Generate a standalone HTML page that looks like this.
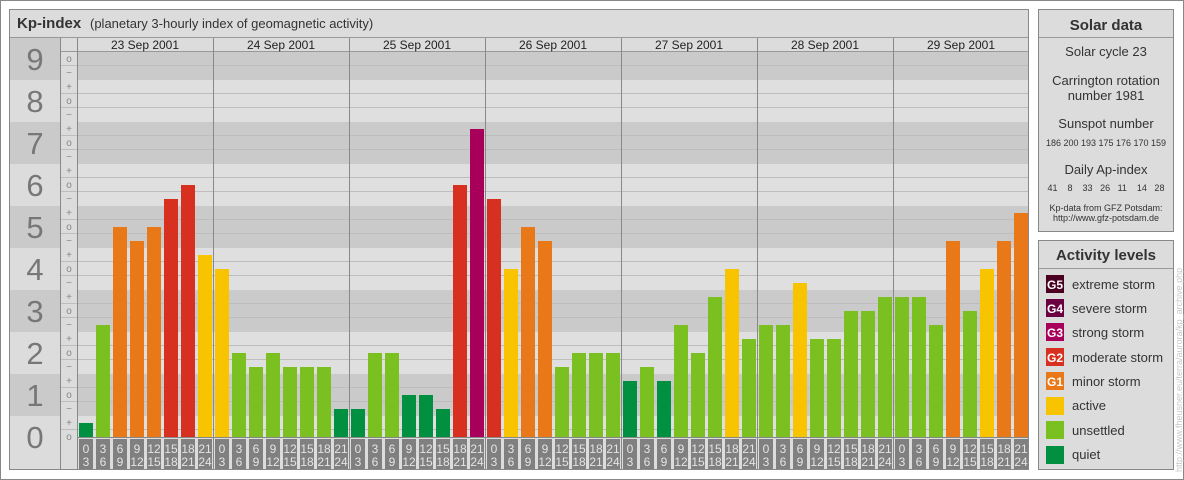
<!DOCTYPE html>
<html><head><meta charset="utf-8"><style>
html,body{margin:0;padding:0;background:#fff}
svg{display:block;font-family:"Liberation Sans",sans-serif}
</style></head><body>
<svg width="1184" height="480" viewBox="0 0 1184 480" xmlns="http://www.w3.org/2000/svg">
<rect x="0.5" y="0.5" width="1183" height="479" fill="#fff" stroke="#888"/>
<rect x="9.5" y="9.5" width="1019" height="460" fill="#dcdcdc" stroke="#888"/>
<line x1="10" y1="37.5" x2="1028" y2="37.5" stroke="#999"/>
<text x="17" y="28" font-size="15" font-weight="bold" fill="#333">Kp-index</text>
<text x="90" y="28" font-size="13" fill="#333">(planetary 3-hourly index of geomagnetic activity)</text>
<g fill="#cacaca">
<rect x="10" y="38" width="50" height="42"/><rect x="77" y="51" width="951" height="29"/>
<rect x="10" y="122" width="50" height="42"/><rect x="77" y="122" width="951" height="42"/>
<rect x="10" y="206" width="50" height="42"/><rect x="77" y="206" width="951" height="42"/>
<rect x="10" y="290" width="50" height="42"/><rect x="77" y="290" width="951" height="42"/>
<rect x="10" y="374" width="50" height="42"/><rect x="77" y="374" width="951" height="42"/>
</g>
<g fill="#dfdfdf">
<rect x="77" y="80" width="951" height="42"/><rect x="77" y="164" width="951" height="42"/>
<rect x="77" y="248" width="951" height="42"/><rect x="77" y="332" width="951" height="42"/>
<rect x="77" y="416" width="951" height="22"/>
</g>
<g stroke="#bdbdbd" stroke-width="1">
<line x1="60" y1="65.5" x2="1028" y2="65.5"/>
<line x1="60" y1="93.5" x2="1028" y2="93.5"/><line x1="60" y1="107.5" x2="1028" y2="107.5"/>
<line x1="60" y1="135.5" x2="1028" y2="135.5"/><line x1="60" y1="149.5" x2="1028" y2="149.5"/>
<line x1="60" y1="177.5" x2="1028" y2="177.5"/><line x1="60" y1="191.5" x2="1028" y2="191.5"/>
<line x1="60" y1="219.5" x2="1028" y2="219.5"/><line x1="60" y1="233.5" x2="1028" y2="233.5"/>
<line x1="60" y1="261.5" x2="1028" y2="261.5"/><line x1="60" y1="275.5" x2="1028" y2="275.5"/>
<line x1="60" y1="303.5" x2="1028" y2="303.5"/><line x1="60" y1="317.5" x2="1028" y2="317.5"/>
<line x1="60" y1="345.5" x2="1028" y2="345.5"/><line x1="60" y1="359.5" x2="1028" y2="359.5"/>
<line x1="60" y1="387.5" x2="1028" y2="387.5"/><line x1="60" y1="401.5" x2="1028" y2="401.5"/>
<line x1="60" y1="429.5" x2="1028" y2="429.5"/>
</g>
<line x1="60" y1="51.5" x2="1028" y2="51.5" stroke="#999"/>
<line x1="60.5" y1="38" x2="60.5" y2="469" stroke="#888"/>
<line x1="77.5" y1="38" x2="77.5" y2="469" stroke="#888"/>
<g font-size="31" fill="#777" text-anchor="middle">
<text x="35" y="70">9</text><text x="35" y="112">8</text><text x="35" y="154">7</text>
<text x="35" y="196">6</text><text x="35" y="238">5</text><text x="35" y="280">4</text>
<text x="35" y="322">3</text><text x="35" y="364">2</text><text x="35" y="406">1</text>
<text x="35" y="448">0</text>
</g>
<g font-size="10" fill="#888" text-anchor="middle">
<text x="69" y="62">o</text><text x="69" y="76">−</text>
<text x="69" y="90">+</text><text x="69" y="104">o</text><text x="69" y="118">−</text>
<text x="69" y="132">+</text><text x="69" y="146">o</text><text x="69" y="160">−</text>
<text x="69" y="174">+</text><text x="69" y="188">o</text><text x="69" y="202">−</text>
<text x="69" y="216">+</text><text x="69" y="230">o</text><text x="69" y="244">−</text>
<text x="69" y="258">+</text><text x="69" y="272">o</text><text x="69" y="286">−</text>
<text x="69" y="300">+</text><text x="69" y="314">o</text><text x="69" y="328">−</text>
<text x="69" y="342">+</text><text x="69" y="356">o</text><text x="69" y="370">−</text>
<text x="69" y="384">+</text><text x="69" y="398">o</text><text x="69" y="412">−</text>
<text x="69" y="426">+</text><text x="69" y="440">o</text>
</g>
<g font-size="12" fill="#222" text-anchor="middle">
<text x="145" y="49">23 Sep 2001</text><text x="281" y="49">24 Sep 2001</text>
<text x="417" y="49">25 Sep 2001</text><text x="553" y="49">26 Sep 2001</text>
<text x="689" y="49">27 Sep 2001</text><text x="825" y="49">28 Sep 2001</text>
<text x="961" y="49">29 Sep 2001</text>
</g>
<g stroke="#888">
<line x1="213.5" y1="38" x2="213.5" y2="469"/><line x1="349.5" y1="38" x2="349.5" y2="469"/>
<line x1="485.5" y1="38" x2="485.5" y2="469"/><line x1="621.5" y1="38" x2="621.5" y2="469"/>
<line x1="757.5" y1="38" x2="757.5" y2="469"/><line x1="893.5" y1="38" x2="893.5" y2="469"/>
</g>
<g>
<rect x="79" y="423" width="14" height="14" fill="#009040"/>
<rect x="96" y="325" width="14" height="112" fill="#7ac020"/>
<rect x="113" y="227" width="14" height="210" fill="#e87818"/>
<rect x="130" y="241" width="14" height="196" fill="#e87818"/>
<rect x="147" y="227" width="14" height="210" fill="#e87818"/>
<rect x="164" y="199" width="14" height="238" fill="#d83020"/>
<rect x="181" y="185" width="14" height="252" fill="#d83020"/>
<rect x="198" y="255" width="14" height="182" fill="#f8c400"/>
<rect x="215" y="269" width="14" height="168" fill="#f8c400"/>
<rect x="232" y="353" width="14" height="84" fill="#7ac020"/>
<rect x="249" y="367" width="14" height="70" fill="#7ac020"/>
<rect x="266" y="353" width="14" height="84" fill="#7ac020"/>
<rect x="283" y="367" width="14" height="70" fill="#7ac020"/>
<rect x="300" y="367" width="14" height="70" fill="#7ac020"/>
<rect x="317" y="367" width="14" height="70" fill="#7ac020"/>
<rect x="334" y="409" width="14" height="28" fill="#009040"/>
<rect x="351" y="409" width="14" height="28" fill="#009040"/>
<rect x="368" y="353" width="14" height="84" fill="#7ac020"/>
<rect x="385" y="353" width="14" height="84" fill="#7ac020"/>
<rect x="402" y="395" width="14" height="42" fill="#009040"/>
<rect x="419" y="395" width="14" height="42" fill="#009040"/>
<rect x="436" y="409" width="14" height="28" fill="#009040"/>
<rect x="453" y="185" width="14" height="252" fill="#d83020"/>
<rect x="470" y="129" width="14" height="308" fill="#a8005a"/>
<rect x="487" y="199" width="14" height="238" fill="#d83020"/>
<rect x="504" y="269" width="14" height="168" fill="#f8c400"/>
<rect x="521" y="227" width="14" height="210" fill="#e87818"/>
<rect x="538" y="241" width="14" height="196" fill="#e87818"/>
<rect x="555" y="367" width="14" height="70" fill="#7ac020"/>
<rect x="572" y="353" width="14" height="84" fill="#7ac020"/>
<rect x="589" y="353" width="14" height="84" fill="#7ac020"/>
<rect x="606" y="353" width="14" height="84" fill="#7ac020"/>
<rect x="623" y="381" width="14" height="56" fill="#009040"/>
<rect x="640" y="367" width="14" height="70" fill="#7ac020"/>
<rect x="657" y="381" width="14" height="56" fill="#009040"/>
<rect x="674" y="325" width="14" height="112" fill="#7ac020"/>
<rect x="691" y="353" width="14" height="84" fill="#7ac020"/>
<rect x="708" y="297" width="14" height="140" fill="#7ac020"/>
<rect x="725" y="269" width="14" height="168" fill="#f8c400"/>
<rect x="742" y="339" width="14" height="98" fill="#7ac020"/>
<rect x="759" y="325" width="14" height="112" fill="#7ac020"/>
<rect x="776" y="325" width="14" height="112" fill="#7ac020"/>
<rect x="793" y="283" width="14" height="154" fill="#f8c400"/>
<rect x="810" y="339" width="14" height="98" fill="#7ac020"/>
<rect x="827" y="339" width="14" height="98" fill="#7ac020"/>
<rect x="844" y="311" width="14" height="126" fill="#7ac020"/>
<rect x="861" y="311" width="14" height="126" fill="#7ac020"/>
<rect x="878" y="297" width="14" height="140" fill="#7ac020"/>
<rect x="895" y="297" width="14" height="140" fill="#7ac020"/>
<rect x="912" y="297" width="14" height="140" fill="#7ac020"/>
<rect x="929" y="325" width="14" height="112" fill="#7ac020"/>
<rect x="946" y="241" width="14" height="196" fill="#e87818"/>
<rect x="963" y="311" width="14" height="126" fill="#7ac020"/>
<rect x="980" y="269" width="14" height="168" fill="#f8c400"/>
<rect x="997" y="241" width="14" height="196" fill="#e87818"/>
<rect x="1014" y="213" width="14" height="224" fill="#e87818"/>
</g>
<line x1="77" y1="437.5" x2="1028" y2="437.5" stroke="#888"/>
<g fill="#808080">
<rect x="79" y="439" width="14" height="30"/><rect x="96" y="439" width="14" height="30"/><rect x="113" y="439" width="14" height="30"/><rect x="130" y="439" width="14" height="30"/><rect x="147" y="439" width="14" height="30"/><rect x="164" y="439" width="14" height="30"/><rect x="181" y="439" width="14" height="30"/><rect x="198" y="439" width="14" height="30"/>
<rect x="215" y="439" width="14" height="30"/><rect x="232" y="439" width="14" height="30"/><rect x="249" y="439" width="14" height="30"/><rect x="266" y="439" width="14" height="30"/><rect x="283" y="439" width="14" height="30"/><rect x="300" y="439" width="14" height="30"/><rect x="317" y="439" width="14" height="30"/><rect x="334" y="439" width="14" height="30"/>
<rect x="351" y="439" width="14" height="30"/><rect x="368" y="439" width="14" height="30"/><rect x="385" y="439" width="14" height="30"/><rect x="402" y="439" width="14" height="30"/><rect x="419" y="439" width="14" height="30"/><rect x="436" y="439" width="14" height="30"/><rect x="453" y="439" width="14" height="30"/><rect x="470" y="439" width="14" height="30"/>
<rect x="487" y="439" width="14" height="30"/><rect x="504" y="439" width="14" height="30"/><rect x="521" y="439" width="14" height="30"/><rect x="538" y="439" width="14" height="30"/><rect x="555" y="439" width="14" height="30"/><rect x="572" y="439" width="14" height="30"/><rect x="589" y="439" width="14" height="30"/><rect x="606" y="439" width="14" height="30"/>
<rect x="623" y="439" width="14" height="30"/><rect x="640" y="439" width="14" height="30"/><rect x="657" y="439" width="14" height="30"/><rect x="674" y="439" width="14" height="30"/><rect x="691" y="439" width="14" height="30"/><rect x="708" y="439" width="14" height="30"/><rect x="725" y="439" width="14" height="30"/><rect x="742" y="439" width="14" height="30"/>
<rect x="759" y="439" width="14" height="30"/><rect x="776" y="439" width="14" height="30"/><rect x="793" y="439" width="14" height="30"/><rect x="810" y="439" width="14" height="30"/><rect x="827" y="439" width="14" height="30"/><rect x="844" y="439" width="14" height="30"/><rect x="861" y="439" width="14" height="30"/><rect x="878" y="439" width="14" height="30"/>
<rect x="895" y="439" width="14" height="30"/><rect x="912" y="439" width="14" height="30"/><rect x="929" y="439" width="14" height="30"/><rect x="946" y="439" width="14" height="30"/><rect x="963" y="439" width="14" height="30"/><rect x="980" y="439" width="14" height="30"/><rect x="997" y="439" width="14" height="30"/><rect x="1014" y="439" width="14" height="30"/>
</g>
<g font-size="12" fill="#e4e4e4" text-anchor="middle">
<text x="86" y="453">0</text><text x="86" y="466">3</text><text x="103" y="453">3</text><text x="103" y="466">6</text><text x="120" y="453">6</text><text x="120" y="466">9</text><text x="137" y="453">9</text><text x="137" y="466">12</text><text x="154" y="453">12</text><text x="154" y="466">15</text><text x="171" y="453">15</text><text x="171" y="466">18</text><text x="188" y="453">18</text><text x="188" y="466">21</text><text x="205" y="453">21</text><text x="205" y="466">24</text>
<text x="222" y="453">0</text><text x="222" y="466">3</text><text x="239" y="453">3</text><text x="239" y="466">6</text><text x="256" y="453">6</text><text x="256" y="466">9</text><text x="273" y="453">9</text><text x="273" y="466">12</text><text x="290" y="453">12</text><text x="290" y="466">15</text><text x="307" y="453">15</text><text x="307" y="466">18</text><text x="324" y="453">18</text><text x="324" y="466">21</text><text x="341" y="453">21</text><text x="341" y="466">24</text>
<text x="358" y="453">0</text><text x="358" y="466">3</text><text x="375" y="453">3</text><text x="375" y="466">6</text><text x="392" y="453">6</text><text x="392" y="466">9</text><text x="409" y="453">9</text><text x="409" y="466">12</text><text x="426" y="453">12</text><text x="426" y="466">15</text><text x="443" y="453">15</text><text x="443" y="466">18</text><text x="460" y="453">18</text><text x="460" y="466">21</text><text x="477" y="453">21</text><text x="477" y="466">24</text>
<text x="494" y="453">0</text><text x="494" y="466">3</text><text x="511" y="453">3</text><text x="511" y="466">6</text><text x="528" y="453">6</text><text x="528" y="466">9</text><text x="545" y="453">9</text><text x="545" y="466">12</text><text x="562" y="453">12</text><text x="562" y="466">15</text><text x="579" y="453">15</text><text x="579" y="466">18</text><text x="596" y="453">18</text><text x="596" y="466">21</text><text x="613" y="453">21</text><text x="613" y="466">24</text>
<text x="630" y="453">0</text><text x="630" y="466">3</text><text x="647" y="453">3</text><text x="647" y="466">6</text><text x="664" y="453">6</text><text x="664" y="466">9</text><text x="681" y="453">9</text><text x="681" y="466">12</text><text x="698" y="453">12</text><text x="698" y="466">15</text><text x="715" y="453">15</text><text x="715" y="466">18</text><text x="732" y="453">18</text><text x="732" y="466">21</text><text x="749" y="453">21</text><text x="749" y="466">24</text>
<text x="766" y="453">0</text><text x="766" y="466">3</text><text x="783" y="453">3</text><text x="783" y="466">6</text><text x="800" y="453">6</text><text x="800" y="466">9</text><text x="817" y="453">9</text><text x="817" y="466">12</text><text x="834" y="453">12</text><text x="834" y="466">15</text><text x="851" y="453">15</text><text x="851" y="466">18</text><text x="868" y="453">18</text><text x="868" y="466">21</text><text x="885" y="453">21</text><text x="885" y="466">24</text>
<text x="902" y="453">0</text><text x="902" y="466">3</text><text x="919" y="453">3</text><text x="919" y="466">6</text><text x="936" y="453">6</text><text x="936" y="466">9</text><text x="953" y="453">9</text><text x="953" y="466">12</text><text x="970" y="453">12</text><text x="970" y="466">15</text><text x="987" y="453">15</text><text x="987" y="466">18</text><text x="1004" y="453">18</text><text x="1004" y="466">21</text><text x="1021" y="453">21</text><text x="1021" y="466">24</text>
</g>
<rect x="1038.5" y="9.5" width="135" height="222" fill="#dcdcdc" stroke="#888"/>
<line x1="1039" y1="37.5" x2="1173" y2="37.5" stroke="#999"/>
<g text-anchor="middle" fill="#333">
<text x="1106" y="30" font-size="15" font-weight="bold">Solar data</text>
<text x="1106" y="56" font-size="13">Solar cycle 23</text>
<text x="1106" y="85" font-size="13">Carrington rotation</text>
<text x="1106" y="100" font-size="13">number 1981</text>
<text x="1106" y="128" font-size="13">Sunspot number</text>
<text x="1106" y="146" font-size="9">186 200 193 175 176 170 159</text>
<text x="1106" y="174" font-size="13">Daily Ap-index</text>
<text x="1106" y="191" font-size="9" xml:space="preserve">41    8    33   26   11    14   28</text>
<text x="1106" y="211" font-size="9">Kp-data from GFZ Potsdam:</text>
<text x="1106" y="221" font-size="9">http://www.gfz-potsdam.de</text>
</g>
<rect x="1038.5" y="240.5" width="135" height="229" fill="#dcdcdc" stroke="#888"/>
<line x1="1039" y1="268.5" x2="1173" y2="268.5" stroke="#999"/>
<text x="1106" y="260" font-size="15" font-weight="bold" fill="#333" text-anchor="middle">Activity levels</text>
<rect x="1046" y="275" width="18" height="18" fill="#4a0020"/>
<rect x="1046" y="299" width="18" height="18" fill="#6a0040"/>
<rect x="1046" y="323" width="18" height="18" fill="#a8005a"/>
<rect x="1046" y="348" width="18" height="18" fill="#d83020"/>
<rect x="1046" y="372" width="18" height="18" fill="#e87818"/>
<rect x="1046" y="397" width="18" height="18" fill="#f8c400"/>
<rect x="1046" y="421" width="18" height="18" fill="#7ac020"/>
<rect x="1046" y="446" width="18" height="18" fill="#009040"/>
<g font-size="12" font-weight="bold" fill="#fff" text-anchor="middle">
<text x="1055" y="289">G5</text><text x="1055" y="313">G4</text><text x="1055" y="337">G3</text>
<text x="1055" y="362">G2</text><text x="1055" y="386">G1</text>
</g>
<g font-size="13" fill="#333">
<text x="1072" y="289">extreme storm</text><text x="1072" y="313">severe storm</text>
<text x="1072" y="337">strong storm</text><text x="1072" y="362">moderate storm</text>
<text x="1072" y="386">minor storm</text><text x="1072" y="410">active</text>
<text x="1072" y="435">unsettled</text><text x="1072" y="459">quiet</text>
</g>
<text transform="translate(1182,472) rotate(-90)" font-size="9" fill="#c8c8c8">http://www.fheusner.eu/terra/aurora/kp_archive.php</text>
</svg>
</body></html>
